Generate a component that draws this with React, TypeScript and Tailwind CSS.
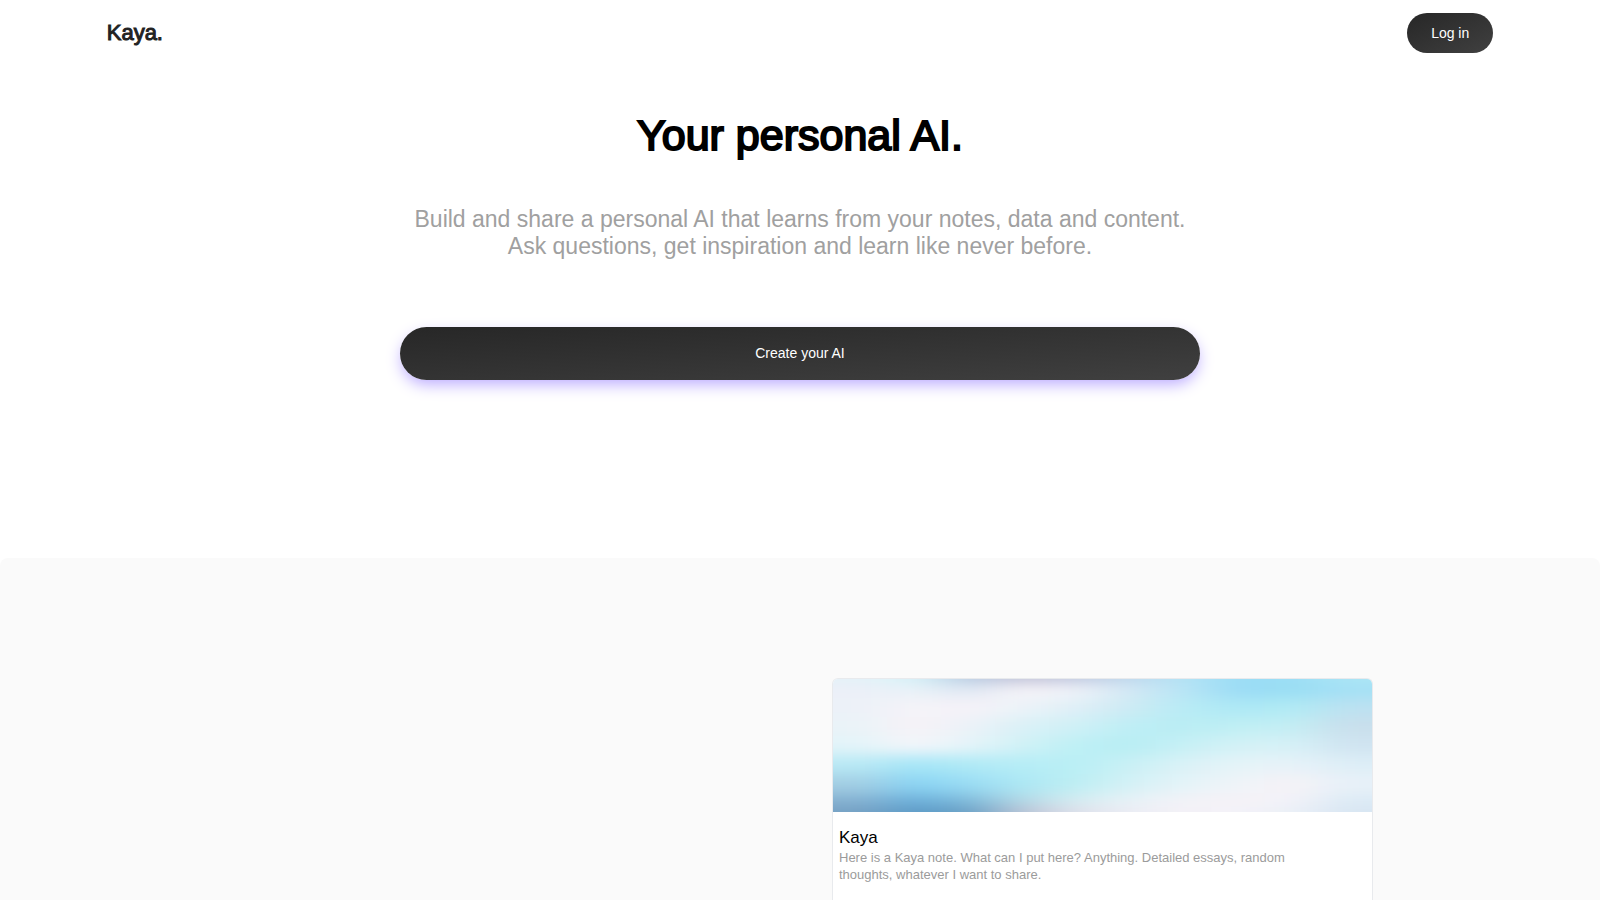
interface Note {
    title: string;
    body: string;
}

interface CoverBand {
    y: number;
    height: number;
    colors: string[];
}

const NOTE: Note = {
    title: 'Kaya',
    body: 'Here is a Kaya note. What can I put here? Anything. Detailed essays, random thoughts, whatever I want to share.',
};

const COVER_BANDS: CoverBand[] = [
    {
        y: -40,
        height: 44,
        colors: ['#e3f1f8', '#d4f3f8', '#b3c8e0', '#bfbfd5', '#bdc5dd', '#bdd6ec', '#b4e3f5', '#9bddf5', '#9cdef5', '#aee6f5'],
    },
    {
        y: 4,
        height: 15,
        colors: ['#ecf0f8', '#e9f2f8', '#dfe8f4', '#f8f4f8', '#f1f3f9', '#d4e8f5', '#b9e5f5', '#9adbf5', '#98ddf4', '#a3e0f5'],
    },
    {
        y: 19,
        height: 19,
        colors: ['#ecf1f8', '#f5f3f8', '#f6f2f8', '#ecf3f8', '#dfeff7', '#cdeaf4', '#b8ecf5', '#ade8f5', '#b0ebf4', '#bce1f1'],
    },
    {
        y: 38,
        height: 19,
        colors: ['#eaf3f8', '#f7f2f7', '#ecf2f8', '#daf1f7', '#cff0f6', '#bdeef5', '#b9edf4', '#c0eff4', '#c4eef4', '#c9dfec'],
    },
    {
        y: 57,
        height: 19,
        colors: ['#e3f4f9', '#f4f6fa', '#e5f4f9', '#d0f1f6', '#bdf0f5', '#b7edf4', '#c6f0f5', '#d4f1f6', '#d6f1f7', '#d0e4f1'],
    },
    {
        y: 76,
        height: 19,
        colors: ['#b9e9f5', '#a5e6f7', '#b0eaf6', '#b6edf6', '#b9eff5', '#c9f0f5', '#daf2f7', '#e5f3f8', '#e7f2f8', '#ddeef7'],
    },
    {
        y: 95,
        height: 19,
        colors: ['#a4cfe4', '#8ad4f4', '#9adcf4', '#ade8f4', '#bdeef3', '#d4f1f6', '#e4f3f8', '#eff3f8', '#f6f2f7', '#e8f1f8'],
    },
    {
        y: 114,
        height: 14,
        colors: ['#86b2d2', '#6cb1dc', '#80bbdb', '#b4d9e6', '#d6edf2', '#e8f2f7', '#f3f2f7', '#f6f2f7', '#f3f2f8', '#dcebf6'],
    },
    {
        y: 128,
        height: 45,
        colors: ['#749fc2', '#5a98c5', '#669dc2', '#bcc0d3', '#e0dfea', '#ececf4', '#f4f1f7', '#f3f2f8', '#eaf0f7', '#d8e5f2'],
    },
];

/* Soft sky-coloured cover at the top of a note */
function NoteCover() {
    return (
        <svg
            className="block h-[133px] w-full"
            viewBox="0 0 540 133"
            preserveAspectRatio="none"
            aria-hidden="true"
        >
            <defs>
                <filter
                    id="soften"
                    filterUnits="userSpaceOnUse"
                    x="-100"
                    y="-40"
                    width="740"
                    height="213"
                    colorInterpolationFilters="sRGB"
                >
                    <feGaussianBlur stdDeviation="24 7" />
                </filter>
            </defs>
            <g filter="url(#soften)" shapeRendering="crispEdges">
                {COVER_BANDS.map((band) =>
                    band.colors.map((color, i) => {
                        /* the outer columns run past the edges so the blur has no pale rim */
                        const left = i === 0 ? -100 : i * 54;
                        const right = i === band.colors.length - 1 ? 640 : (i + 1) * 54;
                        return (
                            <rect
                                key={`${band.y}-${i}`}
                                x={left}
                                y={band.y}
                                width={right - left}
                                height={band.height}
                                fill={color}
                            />
                        );
                    }),
                )}
            </g>
        </svg>
    );
}

function NoteCard({ note }: { note: Note }) {
    return (
        <article className="flex w-full max-w-[541px] flex-1 flex-col overflow-hidden rounded-t-md border border-b-0 border-[#e8eaed] bg-white">
            <NoteCover />
            <div className="px-1.5 pt-4 pb-5">
                <h2 className="text-[17px] leading-[19px] text-black">{note.title}</h2>
                <p className="mt-0.5 w-[480px] max-w-full text-[13px] leading-[17px] text-[#9b9b9b]">{note.body}</p>
            </div>
        </article>
    );
}

export default function App() {
    return (
        <div className="flex min-h-screen flex-col bg-white font-['Liberation_Sans',Arial,sans-serif]">
            <header className="flex items-center justify-between px-[6.67%] pt-[13px]">
                <a href="#" className="text-[22px] leading-[40px] text-[#222] [-webkit-text-stroke:1px_#222]">
                    Kaya.
                </a>
                <button
                    type="button"
                    className="h-10 rounded-full bg-linear-to-br from-[#272727] to-[#404040] px-6 text-[14px] text-white"
                >
                    Log in
                </button>
            </header>

            <main className="flex flex-1 flex-col">
                <section className="flex flex-col items-center pt-14 pb-[178px] text-center">
                    <h1 className="text-[43px] leading-[52px] text-black [-webkit-text-stroke:2px_#000]">
                        Your personal AI.
                    </h1>
                    <p className="mt-[45px] text-[23px] leading-[27px] text-[#a0a0a0]">
                        Build and share a personal AI that learns from your notes, data and content.
                        <br />
                        Ask questions, get inspiration and learn like never before.
                    </p>
                    <button
                        type="button"
                        className="mt-[67px] h-[53px] w-1/2 rounded-full bg-linear-to-br from-[#272727] to-[#404040] text-[14px] text-white shadow-[0_6px_16px_-2px_#b9a8ff]"
                    >
                        Create your AI
                    </button>
                </section>

                <section className="flex flex-1 flex-col rounded-t-lg bg-[#fafafa] pt-[120px] pl-[52%]">
                    <NoteCard note={NOTE} />
                </section>
            </main>
        </div>
    );
}
